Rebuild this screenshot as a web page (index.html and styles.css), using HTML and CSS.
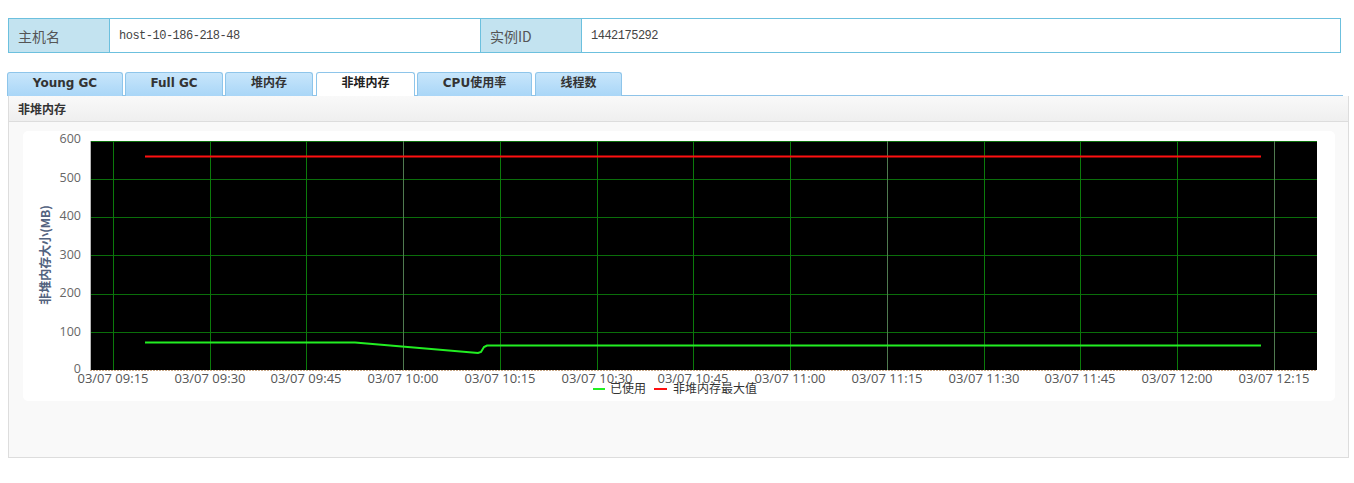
FILE: index.html
```html
<!DOCTYPE html>
<html lang="zh">
<head>
<meta charset="utf-8">
<title>非堆内存</title>
<link rel="stylesheet" href="styles.css">
</head>
<body>
<table class="info">
  <tr>
    <td class="lbl">主机名</td>
    <td class="val val-host">host-10-186-218-48</td>
    <td class="lbl">实例ID</td>
    <td class="val">1442175292</td>
  </tr>
</table>

<div class="tabs">
  <div class="tab t1">Young GC</div>
  <div class="tab t2">Full GC</div>
  <div class="tab t3">堆内存</div>
  <div class="tab t4 active">非堆内存</div>
  <div class="tab t5">CPU使用率</div>
  <div class="tab t6">线程数</div>
</div>

<div class="panel">
  <div class="panel-head">非堆内存</div>
  <div class="panel-body">
    <div class="chart">
      <svg width="1312" height="270" viewBox="0 0 1312 270" xmlns="http://www.w3.org/2000/svg">
        <rect x="67" y="10" width="1227" height="229" fill="#000"/>
        <g stroke="#0a6e0a" stroke-width="1">
          <line x1="67" y1="10.5" x2="1294" y2="10.5"/>
          <line x1="67" y1="48.5" x2="1294" y2="48.5"/>
          <line x1="67" y1="86.5" x2="1294" y2="86.5"/>
          <line x1="67" y1="124.5" x2="1294" y2="124.5"/>
          <line x1="67" y1="163.5" x2="1294" y2="163.5"/>
          <line x1="67" y1="201.5" x2="1294" y2="201.5"/>
        </g>
        <g stroke="#0b7a0b" stroke-width="1">
          <line x1="90.5" y1="10" x2="90.5" y2="239"/>
          <line x1="187.5" y1="10" x2="187.5" y2="239"/>
          <line x1="283.5" y1="10" x2="283.5" y2="239"/>
          <line x1="477.5" y1="10" x2="477.5" y2="239"/>
          <line x1="574.5" y1="10" x2="574.5" y2="239"/>
          <line x1="670.5" y1="10" x2="670.5" y2="239"/>
          <line x1="767.5" y1="10" x2="767.5" y2="239"/>
          <line x1="961.5" y1="10" x2="961.5" y2="239"/>
          <line x1="1057.5" y1="10" x2="1057.5" y2="239"/>
          <line x1="1154.5" y1="10" x2="1154.5" y2="239"/>
        </g>
        <g stroke="#4f7a4f" stroke-width="1">
          <line x1="380.5" y1="10" x2="380.5" y2="239"/>
          <line x1="864.5" y1="10" x2="864.5" y2="239"/>
          <line x1="1251.5" y1="10" x2="1251.5" y2="239"/>
        </g>
        <line x1="67.5" y1="10" x2="67.5" y2="239" stroke="#b8b8b8"/>
        <line x1="67" y1="239.5" x2="1294" y2="239.5" stroke="#c8a888" stroke-dasharray="2,1"/>
        <polyline points="122,25.5 1238,25.5" fill="none" stroke="#ff1010" stroke-width="2"/>
        <polyline points="122,211.5 332,211.5 455,222 458,221 461,216 464,214.5 600,214.5 1238,214.5" fill="none" stroke="#22ee22" stroke-width="2"/>
        <g class="ylab" text-anchor="end">
          <text x="58" y="12">600</text>
          <text x="58" y="51">500</text>
          <text x="58" y="89">400</text>
          <text x="58" y="128">300</text>
          <text x="58" y="166">200</text>
          <text x="58" y="205">100</text>
          <text x="58" y="242">0</text>
        </g>
        <text class="ytitle" transform="translate(27,124) rotate(-90)" text-anchor="middle">非堆内存大小(MB)</text>
        <g class="xlab" text-anchor="middle">
          <text x="90" y="252">03/07 09:15</text>
          <text x="187" y="252">03/07 09:30</text>
          <text x="283" y="252">03/07 09:45</text>
          <text x="380" y="252">03/07 10:00</text>
          <text x="477" y="252">03/07 10:15</text>
          <text x="574" y="252">03/07 10:30</text>
          <text x="670" y="252">03/07 10:45</text>
          <text x="767" y="252">03/07 11:00</text>
          <text x="864" y="252">03/07 11:15</text>
          <text x="961" y="252">03/07 11:30</text>
          <text x="1057" y="252">03/07 11:45</text>
          <text x="1154" y="252">03/07 12:00</text>
          <text x="1251" y="252">03/07 12:15</text>
        </g>
        <line x1="570" y1="258" x2="582" y2="258" stroke="#22ee22" stroke-width="2"/>
        <text class="legend" x="587" y="262">已使用</text>
        <line x1="631" y1="258" x2="644" y2="258" stroke="#ff1010" stroke-width="2"/>
        <text class="legend" x="650" y="262">非堆内存最大值</text>
      </svg>
    </div>
  </div>
</div>
</body>
</html>
```

FILE: styles.css
```css
html, body {
  margin: 0;
  padding: 0;
  background: #fff;
}
body {
  padding: 18px 0 0 0;
  font-family: "Liberation Sans", "Noto Sans CJK SC", sans-serif;
}
.info {
  margin-left: 8px;
  width: 1333px;
  height: 35px;
  border-collapse: collapse;
  border: 1px solid #6cc0de;
}
.info td {
  border: 1px solid #6cc0de;
  padding: 0 9px;
  height: 33px;
}
.info .lbl {
  background: #c3e3f0;
  color: #555;
  font-size: 14px;
  font-family: "Noto Sans CJK SC", sans-serif;
  width: 82px;
}
.info .val {
  color: #444;
  font-family: "Liberation Mono", "Noto Sans CJK SC", monospace;
  font-size: 12px;
  letter-spacing: -0.5px;
}
.info .val-host {
  width: 352px;
}
.tabs {
  display: flex;
  margin: 19px 0 0 7px;
  width: 1336px;
  height: 23px;
  border-bottom: 1px solid #8ec3e8;
  gap: 2px;
}
.tab {
  box-sizing: border-box;
  height: 24px;
  border: 1px solid #8ec5ea;
  border-bottom: none;
  border-radius: 3px 3px 0 0;
  background: linear-gradient(#c8e6fb, #a9d6f7);
  color: #333;
  font-family: "DejaVu Sans", "Noto Sans CJK SC", sans-serif;
  font-weight: bold;
  font-size: 12px;
  text-align: center;
  line-height: 21px;
}
.tab.active {
  background: #fff;
  color: #222;
}
.t1 { width: 116px; }
.t2 { width: 98px; }
.t3 { width: 88px; }
.t4 { width: 99px; margin-left: 1px; }
.t5 { width: 115px; }
.t6 { width: 87px; margin-left: 1px; }
.panel {
  box-sizing: border-box;
  margin-left: 8px;
  width: 1341px;
  height: 362px;
  border: 1px solid #ddd;
  border-top: none;
  background: #f9f9f9;
}
.panel-head {
  height: 25px;
  line-height: 25px;
  padding-left: 9px;
  background: linear-gradient(#f9f9f9, #efefef);
  border-bottom: 1px solid #ddd;
  font-family: "Noto Sans CJK SC", sans-serif;
  font-weight: bold;
  font-size: 12px;
  color: #333;
}
.panel-body {
  padding: 9px 0 0 14px;
}
.chart {
  width: 1312px;
  height: 270px;
  background: #fff;
  border-radius: 5px;
}
.chart svg {
  display: block;
}
.ylab text {
  font-family: "Open Sans", "Noto Sans", sans-serif;
  font-size: 12.5px;
  fill: #666;
}
.xlab text {
  font-family: "Open Sans", "Noto Sans", sans-serif;
  font-size: 13px;
  fill: #555;
}
.ytitle {
  font-family: "Noto Sans CJK SC", sans-serif;
  font-size: 12px;
  font-weight: bold;
  fill: #52627e;
}
.legend {
  font-family: "Noto Sans CJK SC", sans-serif;
  font-size: 12px;
  fill: #333;
}
```
